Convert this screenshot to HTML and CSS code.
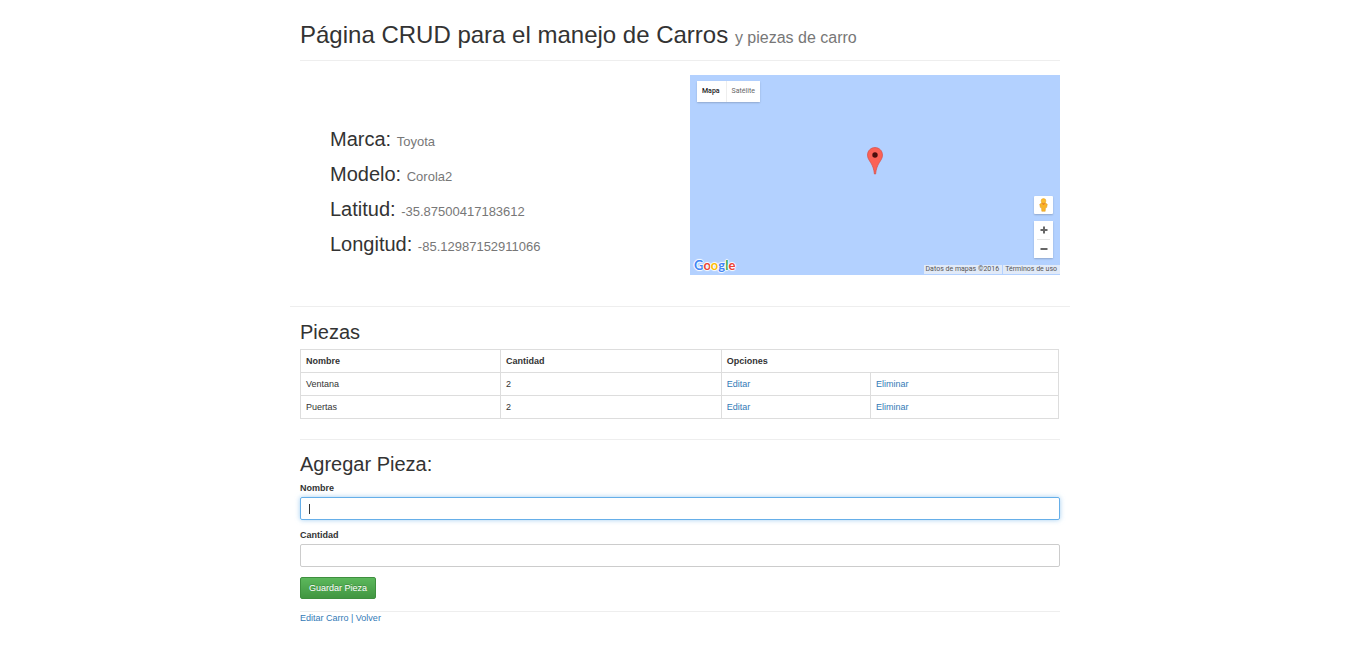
FILE: index.html
```html
<!DOCTYPE html>
<html lang="es">
<head>
<meta charset="utf-8">
<title>Carros</title>
<link rel="stylesheet" href="styles.css">
</head>
<body>
<main class="container">
  <header class="page-header">
    <h1>Página CRUD para el manejo de Carros <small>y piezas de carro</small></h1>
  </header>

  <section class="car">
    <div class="car-info">
      <h3>Marca: <small>Toyota</small></h3>
      <h3>Modelo: <small>Corola2</small></h3>
      <h3>Latitud: <small>-35.87500417183612</small></h3>
      <h3>Longitud: <small>-85.12987152911066</small></h3>
    </div>
    <div class="map">
      <div class="map-type">
        <button type="button" class="active">Mapa</button>
        <button type="button">Satélite</button>
      </div>
      <svg class="marker" width="16" height="28" viewBox="0 0 16 28">
        <path d="M8 .5C3.800.5.5 3.800.5 8c0 3.200 1.700 5.200 3.300 7.800 1.800 3 3.200 6.500 3.600 11.200h1.200c.4-4.700 1.800-8.200 3.600-11.200 1.600-2.600 3.300-4.600 3.300-7.800C15.500 3.800 12.200.5 8 .5z" fill="#fb6155" stroke="#d2504a" stroke-width=".7"/>
        <circle cx="8" cy="8" r="2.700" fill="#4d0f0c"/>
      </svg>
      <div class="map-controls">
        <button type="button" class="pegman" aria-label="Street View">
          <svg width="9" height="14" viewBox="0 0 9 14">
            <path d="M2.500 5h4L8.300 6.300 7.600 9.600 6.500 9.500 6.200 13.300H2.800L2.500 9.500 1.400 9.600.7 6.300z" fill="#f9b529" stroke="#dd9a24" stroke-width=".5"/>
            <circle cx="4.500" cy="3" r="2.400" fill="#fcbd2f" stroke="#dd9a24" stroke-width=".5"/>
            <path d="M2.700 5.400h3.600L4.500 7z" fill="#e8722a"/>
          </svg>
        </button>
        <div class="zoom">
          <button type="button" aria-label="Acercar"><svg width="8" height="8" viewBox="0 0 8 8"><path d="M4 .5v7M.5 4h7" stroke="#666" stroke-width="2"/></svg></button>
          <button type="button" aria-label="Alejar"><svg width="8" height="8" viewBox="0 0 8 8"><path d="M.5 4h7" stroke="#666" stroke-width="2"/></svg></button>
        </div>
      </div>
      <a class="google" href="#"><span class="blue">G</span><span class="red">o</span><span class="yellow">o</span><span class="blue">g</span><span class="green">l</span><span class="red">e</span></a>
      <div class="map-legal"><span>Datos de mapas ©2016</span><a href="#">Términos de uso</a></div>
    </div>
  </section>

  <hr class="wide">

  <section class="parts">
    <h3>Piezas</h3>
    <table>
      <colgroup><col class="c-name"><col class="c-qty"><col class="c-edit"><col></colgroup>
      <thead>
        <tr><th>Nombre</th><th>Cantidad</th><th colspan="2">Opciones</th></tr>
      </thead>
      <tbody>
        <tr><td>Ventana</td><td>2</td><td><a href="#">Editar</a></td><td><a href="#">Eliminar</a></td></tr>
        <tr><td>Puertas</td><td>2</td><td><a href="#">Editar</a></td><td><a href="#">Eliminar</a></td></tr>
      </tbody>
    </table>
  </section>

  <hr>

  <form>
    <h3>Agregar Pieza:</h3>
    <div class="field">
      <label for="nombre">Nombre</label>
      <input id="nombre" type="text" autofocus>
    </div>
    <div class="field">
      <label for="cantidad">Cantidad</label>
      <input id="cantidad" type="text">
    </div>
    <button type="submit" class="save">Guardar Pieza</button>
  </form>

  <footer><a href="#">Editar Carro</a> | <a href="#">Volver</a></footer>
</main>
</body>
</html>
```
FILE: styles.css
```css
* { box-sizing: border-box; }

body {
  margin: 0;
  padding-left: 6px;
  background: #fff;
  color: #333;
  font: 9px/13px "Liberation Sans", Arial, sans-serif;
}

.container {
  max-width: 780px;
  margin: 0 auto;
  padding: 20px 10px;
}

h1, h3 { margin: 0; font-weight: 400; }
h1 { font-size: 24px; line-height: 30px; }
h3 { font-size: 20px; line-height: 22px; }
small { color: #777; font-size: 13px; line-height: 1; }
h1 small { font-size: 16px; }

a { color: #337ab7; text-decoration: none; }
button { font: inherit; cursor: pointer; }

hr { height: 1px; margin: 0; border: 0; background: #eee; }
.wide { margin: 31px -10px 0; }

.page-header {
  padding-bottom: 10px;
  border-bottom: 1px solid #eee;
}

.car {
  display: flex;
  align-items: center;
  margin-top: 14px;
}
.car-info {
  flex: 1;
  display: grid;
  gap: 13px;
  padding: 32px 0 0 30px;
}
.map {
  position: relative;
  width: 370px;
  height: 200px;
  background: #b3d1ff;
  font-family: Roboto, sans-serif;
  font-size: 7px;
  line-height: 9px;
}
.map button {
  border: 0;
  padding: 0;
  background: #fff;
}
.map-type {
  position: absolute;
  top: 6px;
  left: 7px;
  display: flex;
  border-radius: 1px;
  box-shadow: 0 1px 2px rgba(0, 0, 0, .2);
}
.map .map-type button {
  height: 21px;
  padding: 0 5px;
  color: #666;
}
.map .map-type .active {
  padding-right: 6px;
  border-right: 1px solid #eee;
  color: #222;
  font-weight: 500;
}
.marker {
  position: absolute;
  top: 72px;
  left: 177px;
}
.map-controls {
  position: absolute;
  right: 7px;
  bottom: 17px;
  display: grid;
  gap: 7px;
  width: 19px;
}
.pegman, .zoom {
  border-radius: 1px;
  box-shadow: 0 1px 2px rgba(0, 0, 0, .2);
}
.map-controls button {
  display: flex;
  align-items: center;
  justify-content: center;
  width: 100%;
  height: 18px;
}
.zoom { background: #fff; }
.zoom button + button { position: relative; margin-top: 1px; }
.zoom button + button::before {
  content: "";
  position: absolute;
  top: -1px;
  left: 3px;
  right: 3px;
  height: 1px;
  background: #e6e6e6;
}
.google {
  position: absolute;
  left: 4px;
  bottom: 2px;
  font: 700 13px/16px Lato, sans-serif;
  text-shadow: 0 0 1px #fff, 1px 0 1px #fff, -1px 0 1px #fff, 0 1px 1px #fff, 0 -1px 1px #fff;
}
.blue { color: #4285f4; }
.red { color: #ea4335; }
.yellow { color: #fbbc05; }
.green { color: #34a853; }
.map-legal {
  position: absolute;
  right: 0;
  bottom: 1px;
  display: flex;
  gap: 1px;
}
.map-legal > * {
  padding: 0 3px 0 2px;
  background: rgba(245, 245, 245, .7);
  color: #555;
}

.parts { padding-top: 14px; }
table {
  width: calc(100% - 1px);
  margin: 6px 0 20px;
  border-collapse: collapse;
  table-layout: fixed;
}
th, td {
  height: 23px;
  padding: 0 5px;
  border: 1px solid #ddd;
  text-align: left;
}
.c-name { width: 26.4%; }
.c-qty { width: 29.1%; }
.c-edit { width: 19.7%; }

form { padding-top: 13px; }
.field { margin-bottom: 9px; }
label {
  display: block;
  margin: 7px 0 2px;
  font-weight: 700;
}
input {
  display: block;
  width: 100%;
  height: 23px;
  padding: 4px 8px;
  border: 1px solid #ccc;
  border-radius: 2px;
  color: #555;
  font: inherit;
}
/* Thin, steady caret at the start of the empty field */
input:focus {
  border-color: #66afe9;
  outline: 0;
  background: linear-gradient(#333, #333) 8px center / 1px 10px no-repeat;
  box-shadow: 0 0 5px rgba(102, 175, 233, .6);
  caret-color: transparent;
}
.save {
  display: block;
  height: 22px;
  margin-top: 10px;
  padding: 0 8px;
  border: 1px solid #3e8f3e;
  border-radius: 2px;
  background: linear-gradient(#5cb85c, #419641);
  color: #fff;
  text-shadow: 0 -1px 0 rgba(0, 0, 0, .2);
}

footer {
  margin-top: 12px;
  border-top: 1px solid #eee;
  color: #337ab7;
}
```
